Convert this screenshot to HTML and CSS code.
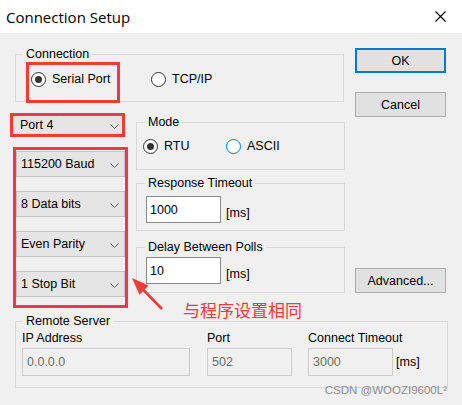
FILE: index.html
```
<!DOCTYPE html>
<html>
<head>
<meta charset="utf-8">
<link rel="stylesheet" href="styles.css">
</head>
<body>
<div class="window">
  <div class="titlebar">
    <span class="title">Connection Setup</span>
    <span class="close"><svg width="11" height="11" viewBox="0 0 11 11"><path d="M0.5 0.5 L10.5 10.5 M10.5 0.5 L0.5 10.5" stroke="#000" stroke-width="1.1" fill="none"/></svg></span>
  </div>
  <div class="top">
    <div class="main">
      <fieldset class="group conn">
        <legend>Connection</legend>
        <div class="radio-row">
          <div class="hl hl-serial">
            <label class="radio"><span class="dot checked"></span>Serial Port</label>
          </div>
          <label class="radio tcp"><span class="dot"></span>TCP/IP</label>
        </div>
      </fieldset>
      <div class="row2">
        <div class="combos">
          <div class="hl port-hl">
            <div class="combo"><span>Port 4</span><svg class="chev" width="9" height="5" viewBox="0 0 9 5"><polyline points="0.5,0.5 4.5,4.5 8.5,0.5" fill="none" stroke="#606060" stroke-width="1"/></svg></div>
          </div>
          <div class="hl serial-hl">
            <div class="combo"><span>115200 Baud</span><svg class="chev" width="9" height="5" viewBox="0 0 9 5"><polyline points="0.5,0.5 4.5,4.5 8.5,0.5" fill="none" stroke="#606060" stroke-width="1"/></svg></div>
            <div class="combo"><span>8 Data bits</span><svg class="chev" width="9" height="5" viewBox="0 0 9 5"><polyline points="0.5,0.5 4.5,4.5 8.5,0.5" fill="none" stroke="#606060" stroke-width="1"/></svg></div>
            <div class="combo"><span>Even Parity</span><svg class="chev" width="9" height="5" viewBox="0 0 9 5"><polyline points="0.5,0.5 4.5,4.5 8.5,0.5" fill="none" stroke="#606060" stroke-width="1"/></svg></div>
            <div class="combo"><span>1 Stop Bit</span><svg class="chev" width="9" height="5" viewBox="0 0 9 5"><polyline points="0.5,0.5 4.5,4.5 8.5,0.5" fill="none" stroke="#606060" stroke-width="1"/></svg></div>
          </div>
        </div>
        <div class="groups">
          <fieldset class="group mode">
            <legend>Mode</legend>
            <div class="mode-row">
              <label class="radio rtu"><span class="dot checked"></span>RTU</label>
              <label class="radio asc"><span class="dot focus"></span>ASCII</label>
            </div>
          </fieldset>
          <fieldset class="group resp">
            <legend>Response Timeout</legend>
            <div class="field-row">
              <div class="input">1000</div>
              <span class="unit">[ms]</span>
            </div>
          </fieldset>
          <fieldset class="group delay">
            <legend>Delay Between Polls</legend>
            <div class="field-row delay-row">
              <div class="input">10</div>
              <span class="unit">[ms]</span>
            </div>
          </fieldset>
        </div>
      </div>
    </div>
    <div class="buttons">
      <div class="btn ok">OK</div>
      <div class="btn cancel">Cancel</div>
      <div class="btn adv">Advanced...</div>
    </div>
  </div>
  <fieldset class="group remote">
    <legend>Remote Server</legend>
    <div class="remote-row">
      <div class="rfield ip">
        <span class="rlabel">IP Address</span>
        <div class="dinput ip-in">0.0.0.0</div>
      </div>
      <div class="rfield port">
        <span class="rlabel">Port</span>
        <div class="dinput port-in">502</div>
      </div>
      <div class="rfield ct">
        <span class="rlabel">Connect Timeout</span>
        <div class="ct-row">
          <div class="dinput ct-in">3000</div>
          <span class="unit2">[ms]</span>
        </div>
      </div>
    </div>
  </fieldset>
  <svg class="arrow" width="45" height="45" viewBox="0 0 45 45">
    <line x1="18" y1="19.5" x2="37" y2="39" stroke="#f23a3a" stroke-width="2.6"/>
    <polygon points="7,8 23.5,15.5 14.5,24.8" fill="#f23a3a"/>
  </svg>
  <div class="note">与程序设置相同</div>
  <div class="watermark">CSDN @WOOZI9600L²</div>
</div>
</body>
</html>
```
FILE: styles.css
```
html, body {
  margin: 0;
  padding: 0;
}
body {
  width: 462px;
  height: 405px;
  overflow: hidden;
  background: #f0f0f0;
  font-family: "Liberation Sans", Arial, sans-serif;
  font-size: 12.5px;
  color: #000;
}
.window {
  position: relative;
  width: 462px;
  height: 405px;
}
.titlebar {
  height: 33px;
  background: #fff;
  display: flex;
  align-items: center;
  justify-content: space-between;
  padding-left: 6px;
  box-sizing: border-box;
}
.title {
  font-family: "Open Sans", "Noto Sans", sans-serif;
  font-size: 15px;
}
.close {
  width: 44px;
  height: 33px;
  display: flex;
  align-items: center;
  justify-content: center;
}
.top {
  display: flex;
}
.main {
  margin-left: 10px;
  width: 335px;
  margin-top: 14px;
}
.buttons {
  margin-left: 10px;
  width: 91px;
  margin-top: 15px;
  display: flex;
  flex-direction: column;
}
.group {
  margin: 0;
  padding: 0;
  border: 1px solid #d9d9d9;
  box-sizing: border-box;
  min-width: 0;
}
.group > legend {
  padding: 0 3px;
  line-height: 14px;
  height: 14px;
}
.conn {
  margin-left: 5px;
  width: 329px;
  height: 55px;
}
.conn > legend {
  margin-left: 7px;
}
.radio-row {
  display: flex;
  margin: 1px 0 0 10px;
}
.hl {
  border: 3px solid #f23a3a;
  box-sizing: border-box;
}
.hl-serial {
  width: 94px;
  height: 41px;
  padding: 7px 0 0 2px;
}
.radio {
  display: flex;
  align-items: center;
  gap: 6px;
  line-height: 15px;
  height: 15px;
}
.dot {
  width: 15px;
  height: 15px;
  border: 1px solid #333;
  border-radius: 50%;
  box-sizing: border-box;
  background: #fff;
  display: flex;
  align-items: center;
  justify-content: center;
  flex: none;
}
.dot.checked::after {
  content: "";
  width: 7px;
  height: 7px;
  border-radius: 50%;
  background: #333;
}
.dot.focus {
  border-color: #0078d7;
}
.tcp {
  margin-left: 31px;
  margin-top: 10px;
}
.row2 {
  display: flex;
  margin-top: 11px;
}
.combos {
  width: 118px;
  display: flex;
  flex-direction: column;
}
.port-hl {
  width: 115px;
  height: 24px;
}
.serial-hl {
  width: 115px;
  height: 161px;
  margin-left: 3px;
  margin-top: 10px;
  padding-top: 1px;
  display: flex;
  flex-direction: column;
  gap: 14px;
}
.combo {
  height: 26px;
  background: #e5e5e5;
  border: 1px solid #c4c4c4;
  box-sizing: border-box;
  display: flex;
  align-items: center;
  justify-content: space-between;
  padding: 0 5px 0 4px;
}
.port-hl .combo {
  height: 18px;
  border: none;
  padding: 0 3px 0 7px;
}
.chev {
  margin-top: 2px;
}
.groups {
  margin-left: 8px;
  width: 209px;
  margin-top: 2px;
  display: flex;
  flex-direction: column;
}
.groups .group > legend {
  margin-left: 8px;
}
.mode {
  height: 55px;
}
.resp {
  height: 55px;
  margin-top: 6px;
}
.delay {
  height: 53px;
  margin-top: 9px;
}
.mode-row {
  display: flex;
  margin: 10px 0 0 6px;
}
.rtu {
  width: 83px;
}
.field-row {
  display: flex;
  align-items: center;
  margin: 6px 0 0 9px;
}
.delay-row {
  margin-top: 3px;
}
.input {
  width: 75px;
  height: 27px;
  box-sizing: border-box;
  border: 1px solid #8a8a8a;
  background: #fff;
  padding-left: 3px;
  display: flex;
  align-items: center;
}
.unit {
  margin-left: 5px;
  margin-top: 6px;
}
.btn {
  height: 25px;
  background: #e1e1e1;
  border: 1px solid #adadad;
  box-sizing: border-box;
  display: flex;
  align-items: center;
  justify-content: center;
}
.ok {
  border: 2px solid #0078d7;
}
.cancel {
  margin-top: 19px;
}
.adv {
  margin-top: 151px;
}
.remote {
  margin: 6px 0 0 15px;
  width: 433px;
  height: 74px;
}
.remote > legend {
  margin-left: 7px;
}
.remote-row {
  display: flex;
  margin: 3px 0 0 6px;
}
.rfield {
  display: flex;
  flex-direction: column;
  gap: 2px;
}
.rlabel {
  line-height: 15px;
  height: 15px;
}
.dinput {
  height: 28px;
  box-sizing: border-box;
  border: 1px solid #cccccc;
  background: #f0f0f0;
  color: #6d6d6d;
  padding-left: 4px;
  display: flex;
  align-items: center;
}
.ip-in {
  width: 168px;
}
.port {
  margin-left: 17px;
}
.port-in {
  width: 85px;
}
.ct {
  margin-left: 16px;
}
.ct-row {
  display: flex;
  align-items: center;
}
.ct-in {
  width: 85px;
}
.unit2 {
  margin-left: 3px;
}
.arrow {
  position: absolute;
  left: 125px;
  top: 270px;
}
.note {
  position: absolute;
  left: 183px;
  top: 300px;
  font-family: "Noto Sans CJK SC", "Noto Sans", sans-serif;
  font-size: 17px;
  line-height: 20px;
  color: #f23a3a;
}
.watermark {
  position: absolute;
  right: 15px;
  top: 383px;
  font-size: 11.5px;
  line-height: 14px;
  color: #8c8c8c;
}
```
